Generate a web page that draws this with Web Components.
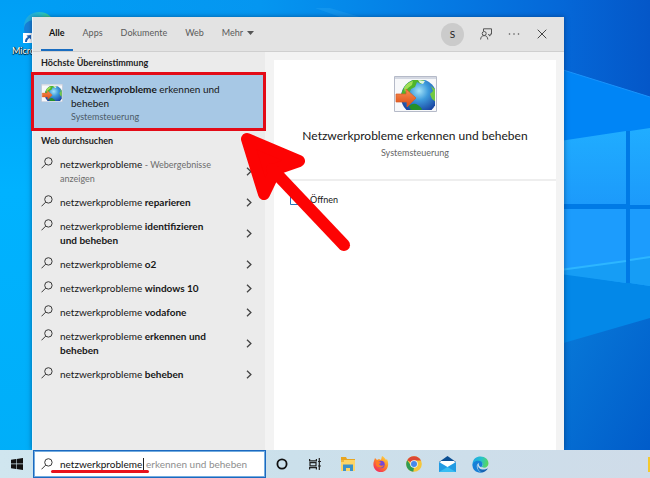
<!DOCTYPE html>
<html lang="de">
<head>
<meta charset="utf-8">
<meta name="viewport" content="width=device-width">
<title>Windows-Suche</title>
<style>
html,body{margin:0;height:100%}
body{font-family:Lato,"Open Sans",sans-serif;font-size:10px;line-height:14px;color:#171717}
</style>
</head>
<body>
<win-desktop>
  <desktop-shortcut slot="icons">Microsoft</desktop-shortcut>
  <search-panel slot="panel">
    <search-tabs slot="header"></search-tabs>
    <group-heading slot="results">Höchste Übereinstimmung</group-heading>
    <best-match slot="results"><b>Netzwerkprobleme</b> erkennen und beheben<span slot="kind">Systemsteuerung</span></best-match>
    <group-heading slot="results">Web durchsuchen</group-heading>
    <web-result slot="results">netzwerkprobleme <small style="color:#6d6d6d;font-size:9px;line-height:12px">- Webergebnisse anzeigen</small></web-result>
    <web-result slot="results">netzwerkprobleme <b>reparieren</b></web-result>
    <web-result slot="results">netzwerkprobleme <b>identifizieren und beheben</b></web-result>
    <web-result slot="results">netzwerkprobleme <b>o2</b></web-result>
    <web-result slot="results">netzwerkprobleme <b>windows 10</b></web-result>
    <web-result slot="results">netzwerkprobleme <b>vodafone</b></web-result>
    <web-result slot="results">netzwerkprobleme <b>erkennen und beheben</b></web-result>
    <web-result slot="results">netzwerkprobleme <b>beheben</b></web-result>
    <result-preview slot="preview">Netzwerkprobleme erkennen und beheben<span slot="kind">Systemsteuerung</span><span slot="action">Öffnen</span></result-preview>
  </search-panel>
  <task-bar slot="taskbar"></task-bar>
  <pointer-arrow slot="overlay"></pointer-arrow>
</win-desktop>

<script>
const define = (name, html) => {
  const t = document.createElement('template');
  t.innerHTML = '<style>*{box-sizing:border-box}svg{display:block}button,a,input{font:inherit;color:inherit}button{border:0;background:none;padding:0;margin:0}a{text-decoration:none}</style>' + html;
  customElements.define(name, class extends HTMLElement {
    constructor() {
      super();
      this.attachShadow({ mode: 'open' }).append(t.content.cloneNode(true));
    }
  });
};

const lens = '<svg width="12" height="12" viewBox="0 0 12 12" fill="none" stroke="#3a3a3a" stroke-width="1"><circle cx="7.4" cy="4.4" r="3.7"/><path d="M4.7 7.1.5 11.3"/></svg>';

const edge = (s, id) => `<svg width="${s}" height="${s}" viewBox="0 0 32 32">
<defs><linearGradient id="${id}a" x1="0" y1=".2" x2="1" y2=".4"><stop offset="0" stop-color="#1ea5e8"/><stop offset=".55" stop-color="#27c3c9"/><stop offset="1" stop-color="#5bd75a"/></linearGradient>
<linearGradient id="${id}b" x1="0" y1="0" x2="1" y2="1"><stop offset="0" stop-color="#1c8fe0"/><stop offset="1" stop-color="#114f9f"/></linearGradient></defs>
<path d="M1 14C2 6 8 1 16 1c9 0 15 6 15 13 0 5-4 8-8 8-3 0-5-1-4-3 1-1 1-2 1-3 0-3-3-5-7-5-6 0-10 3-12 8z" fill="url(#${id}a)"/>
<path d="M1 18C1 12 6 9 12 9c5 0 8 3 8 7 0 2-2 3-2 5-5-1-6-5-5-8-4 2-5 6-3 11 2 4 6 7 10 7C9 33 1 27 1 18z" fill="#1780d8"/>
<path d="M11 16c-2 6 1 13 8 15 5-1 9-4 11-8-6 4-19 4-19-7z" fill="url(#${id}b)"/></svg>`;

const globe = (w, h, id) => `<svg width="${w}" height="${h}" viewBox="0 0 43 36">
<defs><radialGradient id="${id}g" cx=".5" cy=".33" r=".65"><stop offset="0" stop-color="#a5e3f8"/><stop offset=".4" stop-color="#3e9bdc"/><stop offset="1" stop-color="#143a9a"/></radialGradient>
<linearGradient id="${id}o" x1="0" y1="0" x2="0" y2="1"><stop offset="0" stop-color="#f79055"/><stop offset="1" stop-color="#dd4a10"/></linearGradient>
<clipPath id="${id}c"><path d="M2 4h39v30H2z"/></clipPath></defs>
<path d="M.5.5h42v35H.5z" fill="#f7f8fa" stroke="#b5bac8"/><path d="M1 1h41v2H1z" fill="#d4d8e2"/>
<g clip-path="url(#${id}c)"><circle cx="25" cy="21" r="18" fill="url(#${id}g)"/>
<path d="M7 21C8 11 14 5 22 3l8 1-3 4-4-2-2 5-4 2-2 5-5 4z" fill="#4fb52b"/><path d="M10 12c2-4 5-6 9-7l-1 4-4 3-3 4z" fill="#a0df57"/>
<path d="M15 30c5-4 9-2 13 3l-3 5c-5-1-9-4-10-8z" fill="#259029"/><path d="M37 10l5 4v12l-4-3-2-5 3-3z" fill="#72c943"/><path d="M24 4l7 1-2 3-3-1z" fill="#e0f3db"/></g>
<path d="M2 18h10v-5l10 9-9 9v-5H2z" fill="url(#${id}o)" stroke="#d65b25" stroke-width=".7"/></svg>`;

define('win-desktop', `<style>
:host{display:grid;grid-template-rows:1fr auto;min-height:100vh;position:relative;overflow:hidden;isolation:isolate}
.wall{position:absolute;inset:0;width:100%;height:100%;z-index:-2}
main{display:flex;padding:17px 86px 0 32px}
</style>
<svg class="wall" viewBox="0 0 650 478" preserveAspectRatio="none" aria-hidden="true">
<defs>
<linearGradient id="top"><stop offset="0" stop-color="#009ff5"/><stop offset=".4" stop-color="#0596f0"/><stop offset=".7" stop-color="#0578e2"/><stop offset=".86" stop-color="#0568d8"/><stop offset="1" stop-color="#0457c8"/></linearGradient>
<linearGradient id="left" x1="0" y1="0" x2="0" y2="1"><stop offset="0" stop-color="#009ff5"/><stop offset=".4" stop-color="#00b2ff"/><stop offset="1" stop-color="#00aef8"/></linearGradient>
<linearGradient id="right" x1="0" y1="0" x2="1" y2="1"><stop offset="0" stop-color="#087ad9"/><stop offset="1" stop-color="#0059c8"/></linearGradient>
<linearGradient id="pane" x1="0" y1="0" x2="0" y2="1"><stop offset="0" stop-color="#20adff"/><stop offset="1" stop-color="#1c9afb"/></linearGradient>
</defs>
<path d="M0 0h650v478H0z" fill="url(#top)"/>
<path d="M0 0h40v478H0z" fill="url(#left)"/>
<path d="M330 8l30 9h-20l-25-9z" fill="#3aaef5" opacity=".25"/>
<path d="M560 69l90 28v300h-90z" fill="#0085f6"/>
<path d="M560 69l90 28" stroke="#1a94fb"/>
<path d="M560 269h90v209h-90z" fill="#0388e8"/>
<path d="M560 344l90-26v160h-90z" fill="url(#right)"/>
<path d="M560 141l66-10v73h-66zM630 131l20-3v77h-20z" fill="url(#pane)"/>
<path d="M560 209h66v74l-66-10zM630 209h20v77l-20-3z" fill="#1c9cfd"/>
<path d="M560 204h66v5h-66zM626 131h4v152h-4zM630 205h20v4h-20z" fill="#007ae6"/>
<path d="M560 271l66-9v21l-66-9zM630 261l20-3v28l-20-3z" fill="#169df5"/>
<path d="M560 270l66-9M630 260l20-3" stroke="#2db6ff" stroke-width="2"/>
</svg>
<slot name="icons"></slot>
<main><slot name="panel"></slot></main>
<slot name="taskbar"></slot>
<slot name="overlay"></slot>`);

define('desktop-shortcut', `<style>
:host{position:absolute;left:12px;top:11px;z-index:-1;color:#fff;font-size:9px;line-height:12px;text-shadow:0 1px 1px #000,1px 0 1px #000}
div{display:grid;gap:2px;justify-items:start}
.i{position:relative;margin-left:11px}
.s{position:absolute;left:0;bottom:0}
</style><div><span class="i">${edge(32, 'd')}<svg class="s" width="10" height="10" viewBox="0 0 10 10"><path d="M0 0h10v10H0z" fill="#fff"/><path d="M2 9c0-3 1-4 3-5L3.500 2.500 8 2v4.500L6.500 5C5 6 4 7 4 9z" fill="#1d5fb5"/></svg></span><span><slot></slot></span></div>`);

define('search-panel', `<style>
:host{display:flex;flex-direction:column;flex:1;min-width:0;border-left:1px solid #e9f5fc;background:#f3f3f3;box-shadow:0 0 5px rgba(0,30,70,.5)}
.b{display:grid;grid-template-columns:232px minmax(0,1fr);flex:1}
.l{background:#ebebeb}
.r{padding:8px 8px 0 9px;display:flex}
</style><slot name="header"></slot>
<div class="b"><div class="l"><slot name="results"></slot></div><div class="r"><slot name="preview"></slot></div></div>`);

define('search-tabs', `<style>
:host{display:flex;justify-content:space-between;height:35px;box-sizing:border-box;background:#e3e3e3;border-bottom:1px solid #cfcfcf;color:#5a5a5a;padding:0 8px}
nav,.t{display:flex}
nav{gap:2px;font-size:9px}
nav button{padding:0 8px;border-bottom:2px solid transparent;display:flex;align-items:center;gap:4px}
nav button.on{color:#111;font-weight:700;border-color:#1a6dc0}
.t{align-items:center;gap:8px;padding-right:4px}
.t button{display:grid;place-items:center;width:20px;height:24px}
.t .u{width:23px;height:23px;border-radius:50%;background:#cbcbcb;color:#222;margin-right:4px}
</style><nav aria-label="Filter"><button class="on">Alle</button><button>Apps</button><button>Dokumente</button><button>Web</button><button>Mehr <svg width="7" height="4" viewBox="0 0 7 4"><path d="M0 0h7L3.500 4z" fill="#555"/></svg></button></nav>
<div class="t"><button class="u">S</button>
<button aria-label="Feedback"><svg width="12" height="12" viewBox="0 0 12 12" fill="none" stroke="#555"><path d="M3.500 3V.8h8v5.400H10v1.900L8 6.200"/><circle cx="4.200" cy="5.500" r="2"/><path d="M.6 11.500c.2-2.600 1.400-3.900 3.600-3.900s3.400 1.300 3.600 3.900"/></svg></button>
<button aria-label="Weitere Optionen"><svg width="12" height="4" viewBox="0 0 12 4" fill="#555"><circle cx="1.500" cy="2" r=".8"/><circle cx="6" cy="2" r=".8"/><circle cx="10.500" cy="2" r=".8"/></svg></button>
<button aria-label="Schließen"><svg width="10" height="10" viewBox="0 0 10 10" fill="none" stroke="#444"><path d="M.7.7l8.600 8.600M9.300.7L.7 9.300"/></svg></button></div>`);

define('group-heading', `<style>
:host{display:block}
h2{margin:0;padding:0 8px;font-size:9px;line-height:22px;font-weight:700;color:#1d1d1d}
</style><h2><slot></slot></h2>`);

define('best-match', `<style>
:host{display:block;position:relative;background:#a7c8e5}
:host::after{content:"";position:absolute;inset:-2px -1px -1px -2px;border:3px solid #e30b17;pointer-events:none}
a{display:grid;grid-template-columns:22px minmax(0,1fr);gap:8px;padding:8px 28px 7px 8px}
svg{margin-top:2px}
.k{display:block;margin-top:1px;font-size:9px;line-height:12px;color:#4d5b68}
</style><a href="#open">${globe(22, 18, 's')}<span><slot></slot><span class="k"><slot name="kind"></slot></span></span></a>`);

define('web-result', `<style>
:host{display:block}
a{display:grid;grid-template-columns:12px minmax(0,1fr) 6px;gap:7px;padding:5px 13px 5px 8px}
span{padding-right:26px}
.c{align-self:center}
</style><a href="#web">${lens}<span><slot></slot></span><svg class="c" width="6" height="9" viewBox="0 0 6 9" fill="none" stroke="#444" stroke-width="1.300"><path d="M1 .7l3.900 3.800L1 8.300"/></svg></a>`);

define('result-preview', `<style>
:host{display:flex;flex-direction:column;flex:1;background:#fff}
header{display:grid;justify-items:center;padding:16px 8px 19px;border-bottom:2px solid #eee}
h1{margin:15px 0 0;font-size:12px;line-height:18px;font-weight:400}
p{margin:1px 0 0;font-size:9px;line-height:14px;color:#666}
a{display:flex;align-items:center;gap:10px;padding:12px 16px;font-size:9px}
</style><header>${globe(43, 36, 'b')}<h1><slot></slot></h1><p><slot name="kind"></slot></p></header>
<a href="#open"><svg width="10" height="10" viewBox="0 0 10 10" fill="none" stroke="#2675b8"><path d="M4 1.500H.5v8h8V6M6 .5h3.500V4M9.500.5L5 5"/></svg><slot name="action"></slot></a>`);

define('task-bar', `<style>
:host{display:flex;height:28px;background:linear-gradient(90deg,#d0e6ef,#cbe0eb 45%,#cfdce9);position:relative}
.w{width:33px;display:grid;place-items:center}
label{position:relative;display:flex;align-items:center;width:233px;background:#fff;border:1px solid #1b69c0;padding:0 7px;outline:1px solid #73acdf;outline-offset:-2px}
input{width:83px;margin-left:7px;padding:0;border:0;outline:0;background:none;color:#111}
.g{color:#8e8e8e;border-left:1px solid #222;padding-left:2px;line-height:13px;white-space:nowrap}
label::after{content:"";position:absolute;left:17px;bottom:4px;width:98px;height:3px;border-radius:2px;background:#e8101c}
.a{display:flex;gap:9px;margin-left:4px;align-items:center}
.a button{width:24px;height:24px;display:grid;place-items:center}
.n{width:2px;height:15px;background:#f4c92e;margin:7px 0 0 auto}
</style>
<button class="w" aria-label="Start"><svg width="12" height="12" viewBox="0 0 12 12" fill="#111"><path d="M0 1.700l5-.7v4.600H0zM5.600.9L12 0v5.600H5.600zM0 6.300h5V11l-5-.7zM5.600 6.300H12V12l-6.400-.9z"/></svg></button>
<label>${lens}<input aria-label="Suche" value="netzwerkprobleme"><span class="g">erkennen und beheben</span></label>
<div class="a">
<button aria-label="Cortana"><svg width="12" height="12" viewBox="0 0 12 12"><circle cx="6" cy="6" r="4.600" fill="none" stroke="#111" stroke-width="1.800"/></svg></button>
<button aria-label="Aktive Anwendungen"><svg width="12" height="12" viewBox="0 0 12 12" fill="none" stroke="#222" stroke-width="1.200"><path d="M.6 1v1.800h6.800V1M.6 11.500V9.700h6.800v1.800M1 4.600h6v3.300H1zM10.300 0v12M9 3.500h3M9 8h3"/></svg></button>
<button aria-label="Explorer"><svg width="16" height="14" viewBox="0 0 16 14"><path d="M1 0h5l1 2h8v4H1z" fill="#e8a520"/><path d="M1 3h14v11H1z" fill="#fdd567"/><path d="M3 7.500h10V14h-3v-3H6v3H3z" fill="#3c91c8"/><path d="M1 3h3v2H1z" fill="#eeb53b"/></svg></button>
<button aria-label="Firefox"><svg width="16" height="16" viewBox="0 0 16 16"><defs><linearGradient id="f" x1=".9" y1="0" x2=".2" y2="1"><stop offset="0" stop-color="#ffe14a"/><stop offset=".45" stop-color="#ff8a22"/><stop offset="1" stop-color="#f32360"/></linearGradient></defs><path d="M1 5l1-3 2 2 2-1 2 1 1-4c2 1 3 2 4 4l1-1c3 6 0 13-6 13S-1 10 1 5z" fill="url(#f)"/><circle cx="8" cy="8.500" r="3.700" fill="#7547d8"/><path d="M3 5c2 0 4 0 5 2L6 8c1 2 3 2 5 1-1 3-6 4-8 0z" fill="#ff7b25"/></svg></button>
<button aria-label="Chrome"><svg width="16" height="16" viewBox="0 0 16 16"><circle cx="8" cy="8" r="7.800" fill="#f5c63a"/><path d="M8 8L1.200 4.200A7.800 7.800 0 0 1 15 4.500H8z" fill="#dc4735"/><path d="M1.200 4.200l3.900 5.600L8 11.500l-.7 4.300A7.800 7.800 0 0 1 1.200 4.200z" fill="#2f9b55"/><circle cx="8" cy="8" r="3.800" fill="#eef4f8"/><circle cx="8" cy="8" r="3" fill="#4788ec"/></svg></button>
<button aria-label="Mail"><svg width="17" height="16" viewBox="0 0 17 16"><path d="M0 6l8.500-6L17 6z" fill="#0b4f93"/><path d="M1.500 5h14v7h-14z" fill="#fff"/><path d="M0 6l8.500 5L17 6v10H0z" fill="#229be3"/><path d="M0 16l8.500-5L17 16z" fill="#37bdf3"/></svg></button>
<button aria-label="Edge">${edge(17, 'e')}</button>
</div><span class="n"></span>`);

define('pointer-arrow', `<style>
:host{position:absolute;left:238px;top:130px;pointer-events:none}
</style><svg width="116" height="124" viewBox="238 130 116 124" fill="#fd0303" stroke="#fd0303" stroke-linejoin="round" stroke-linecap="round" stroke-width="12"><path d="M247 139l52 22-23 8-12 25z"/><path d="M272 169l72 76"/></svg>`);
</script>
</body>
</html>
